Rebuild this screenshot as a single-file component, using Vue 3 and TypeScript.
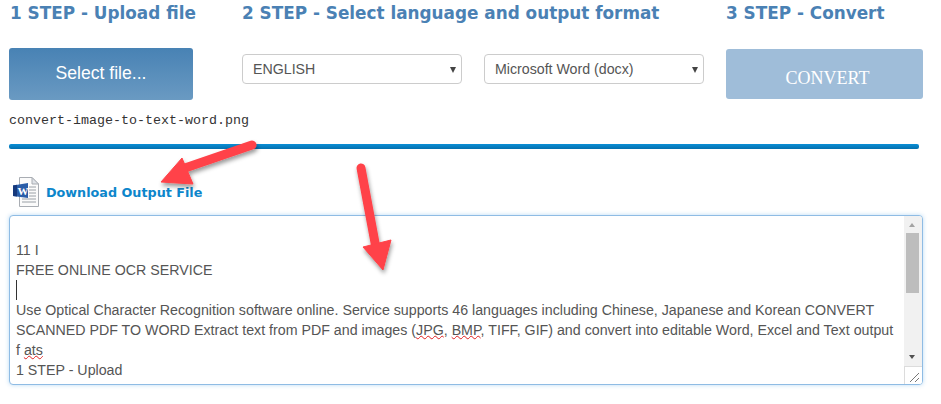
<script setup lang="ts">
const lang = 'ENGLISH'
const format = 'Microsoft Word (docx)'
</script>

<template>
  <div class="page">
    <div class="steps">
      <section class="col-one">
        <h2>1 STEP - Upload file</h2>
        <button class="select-file" type="button">Select file...</button>
      </section>
      <section class="col-two">
        <h2>2 STEP - Select language and output format</h2>
        <div class="selects">
          <div class="select-box">{{ lang }}<i></i></div>
          <div class="select-box">{{ format }}<i></i></div>
        </div>
      </section>
      <section class="col-three">
        <h2>3 STEP - Convert</h2>
        <button class="convert" type="button">CONVERT</button>
      </section>
    </div>

    <div class="filename">convert-image-to-text-word.png</div>
    <div class="progress"></div>

    <a class="download">
      <svg width="28" height="32" viewBox="0 0 28 32">
        <path d="M7.5 1.5H20L26.5 8V30.5H7.5Z" fill="#fbfbfb" stroke="#a9adb3" />
        <path d="M20 1.5V8H26.5Z" fill="#dfe3e8" stroke="#a9adb3" />
        <path d="M17 11h7M17 14h7M17 17h7M17 20h7M10 23h14M10 26h14" stroke="#9aa0a6" stroke-width="1" />
        <path d="M1 9.5 16 7V22L1 20Z" fill="#2a5da8" />
        <path d="M1 9.5 5 8.8V20.5L1 20Z" fill="#16397c" />
        <text x="5.5" y="19" class="word-w">W</text>
      </svg>
      <span>Download Output File</span>
    </a>

    <div class="textarea">
      <div class="text">
        <div class="line">&nbsp;</div>
        <div class="line">11 I</div>
        <div class="line">FREE ONLINE OCR SERVICE</div>
        <div class="line caret-line"><b></b></div>
        <div class="line">Use Optical Character Recognition software online. Service supports 46 languages including Chinese, Japanese and Korean CONVERT</div>
        <div class="line">SCANNED PDF TO WORD Extract text from PDF and images (<u>JPG</u>, <u>BMP</u>, TIFF, GIF) and convert into editable Word, Excel and Text output</div>
        <div class="line">f <u>ats</u></div>
        <div class="line">1 STEP - Upload</div>
      </div>
      <div class="scrollbar">
        <div class="sb-up"></div>
        <div class="sb-track"><div class="sb-thumb"></div></div>
        <div class="sb-down"></div>
        <div class="sb-corner">
          <svg width="17" height="17" viewBox="0 0 17 17">
            <path d="M5 15 14 6M10 15 14 11" stroke="#777" stroke-width="1" fill="none" />
          </svg>
        </div>
      </div>
    </div>

    <svg class="arrows" width="941" height="404" viewBox="0 0 941 404">
      <defs>
        <filter id="shadow" x="-20%" y="-20%" width="150%" height="150%">
          <feDropShadow dx="1" dy="3" stdDeviation="2" flood-color="#000" flood-opacity="0.4" />
        </filter>
      </defs>
      <g fill="#ff4248" stroke="#ff4248" stroke-linejoin="round" filter="url(#shadow)">
        <path d="M252 145 185 168" stroke-width="9" stroke-linecap="round" fill="none" />
        <path d="M182 158 161 182 193 184Z" stroke-width="1" />
        <path d="M361 168 376 248" stroke-width="9" stroke-linecap="round" fill="none" />
        <path d="M363 247 391 240 383 270Z" stroke-width="1" />
      </g>
    </svg>
  </div>
</template>

<style scoped>
.page {
  position: relative;
  width: 941px;
  height: 404px;
  overflow: hidden;
  background: #fff;
  font-family: "Liberation Sans", Arial, sans-serif;
  box-sizing: border-box;
  padding: 0 18px 0 9px;
}
.steps {
  display: flex;
  height: 100px;
}
.steps section {
  flex: none;
}
h2 {
  margin: 0;
  padding: 4px 0 0 1px;
  height: 22px;
  font: bold 16.85px/18px "DejaVu Sans", Verdana, sans-serif;
  color: #4a81b4;
  white-space: nowrap;
}
.col-one {
  width: 233px;
}
.col-two {
  width: 484px;
}
.col-three {
  width: 197px;
}
.col-two h2,
.col-three h2 {
  padding-left: 0;
}
.select-file {
  display: block;
  margin-top: 22px;
  width: 184px;
  height: 52px;
  border: 0;
  border-radius: 3px;
  background: linear-gradient(#4882b4, #6a9ac2);
  color: #fff;
  font: 17.6px "Liberation Sans", Arial, sans-serif;
  padding: 0 0 2px;
}
.selects {
  display: flex;
  gap: 22px;
  margin-top: 28px;
}
.select-box {
  position: relative;
  box-sizing: border-box;
  width: 220px;
  height: 30px;
  padding: 0 0 0 10px;
  border: 1px solid #ccc;
  border-radius: 4px;
  font-size: 14.2px;
  line-height: 28px;
  color: #555;
  background: #fff;
}
.select-box i {
  position: absolute;
  right: 5px;
  top: 12px;
  width: 0;
  height: 0;
  border-left: 3.5px solid transparent;
  border-right: 3.5px solid transparent;
  border-top: 6px solid #444;
}
.convert {
  display: block;
  margin-top: 23px;
  width: 197px;
  height: 50px;
  border: 0;
  border-radius: 3px;
  background: #9fbdd9;
  color: #fff;
  font: 18px "Liberation Serif", "Times New Roman", serif;
  padding: 8px 0 0 6px;
}
.filename {
  margin-top: 13px;
  height: 16px;
  font: 13.33px/15px "Liberation Mono", "Courier New", monospace;
  color: #333;
}
.progress {
  margin-top: 15px;
  width: 910px;
  height: 5px;
  border-radius: 2px;
  background: linear-gradient(#0a8fd6, #0470ae);
}
.download {
  display: flex;
  align-items: center;
  gap: 6px;
  margin: 27px 0 0 3px;
  height: 32px;
  font: bold 12.75px "DejaVu Sans", Verdana, sans-serif;
  color: #0d86cb;
}
.word-w {
  font: bold 11px "Liberation Serif", serif;
  fill: #fff;
}
.textarea {
  display: flex;
  box-sizing: border-box;
  margin-top: 7px;
  width: 914px;
  height: 170px;
  border: 1px solid #8fbce4;
  border-radius: 4px;
  box-shadow: 0 0 4px rgba(102, 175, 233, 0.45);
  overflow: hidden;
  background: #fff;
}
.text {
  flex: 1;
  min-width: 0;
  padding: 4px 0 0 6px;
  font-size: 14.23px;
  line-height: 20px;
  color: #555;
  overflow: hidden;
}
.line {
  height: 20px;
  white-space: nowrap;
}
.caret-line b {
  display: inline-block;
  width: 1px;
  height: 20px;
  background: #333;
}
u {
  text-decoration: underline wavy #e02020 1px;
  text-underline-offset: 0;
}
.scrollbar {
  position: relative;
  flex: 0 0 17px;
  display: flex;
  flex-direction: column;
  background: #f1f1f1;
}
.sb-up,
.sb-down {
  flex: 0 0 17px;
  position: relative;
}
.sb-up::after,
.sb-down::after {
  content: "";
  position: absolute;
  left: 5px;
  width: 0;
  height: 0;
  border-left: 3.5px solid transparent;
  border-right: 3.5px solid transparent;
}
.sb-up::after {
  top: 7px;
  border-bottom: 4px solid #a3a3a3;
}
.sb-down::after {
  top: 6px;
  border-top: 4px solid #505050;
}
.sb-track {
  flex: 1;
}
.sb-thumb {
  width: 13px;
  height: 60px;
  margin-left: 2px;
  background: #bdbdbd;
}
.sb-corner {
  flex: 0 0 17px;
  box-sizing: border-box;
  background: #fff;
  border-top: 1px solid #dcdcdc;
  border-left: 1px solid #dcdcdc;
  line-height: 0;
}
.arrows {
  position: absolute;
  left: 0;
  top: 0;
  pointer-events: none;
}
</style>
